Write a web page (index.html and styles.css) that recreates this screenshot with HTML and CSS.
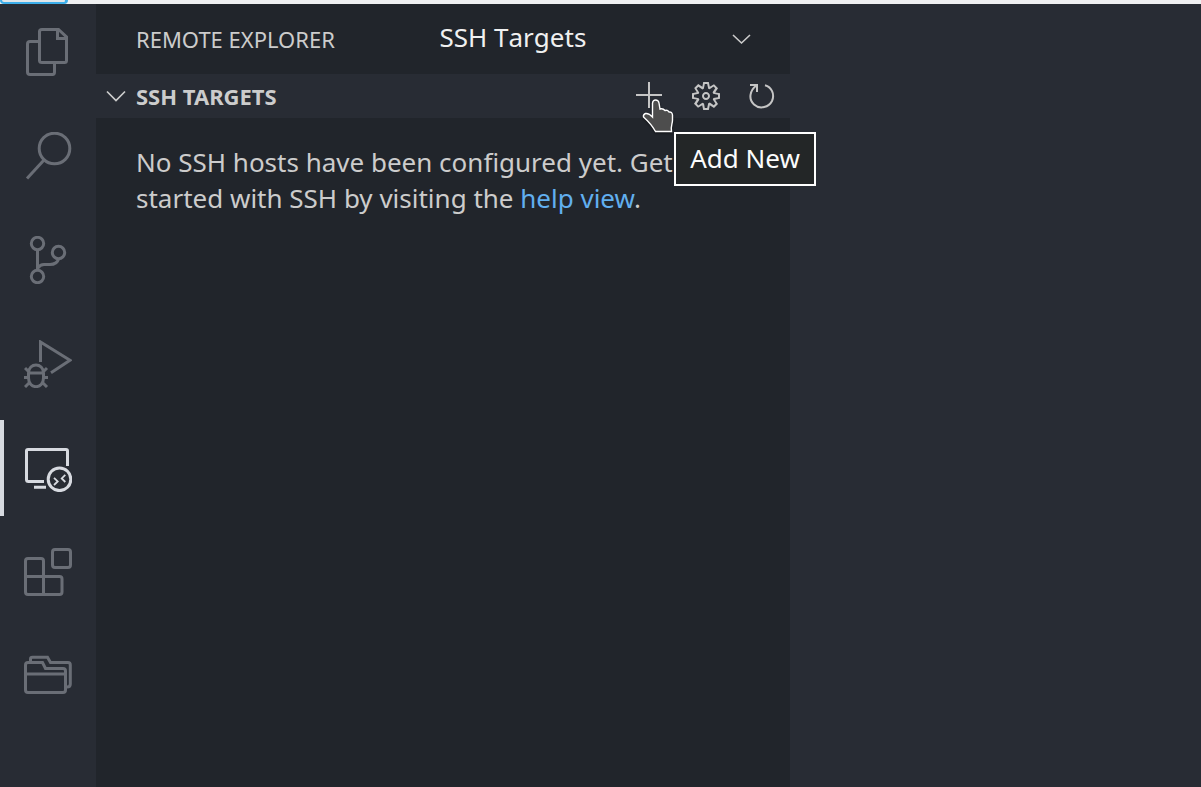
FILE: index.html
```
<!DOCTYPE html>
<html lang="en">
<head>
<meta charset="utf-8">
<title>Remote Explorer</title>
<link rel="stylesheet" href="styles.css">
</head>
<body>
<div class="top-strip"><span class="top-tab"></span></div>
<div class="workbench">
  <nav class="activity-bar">
    <div class="activity"><svg viewBox="24 28 48 48"><path d="M42 29.5H58.5L66.5 37V60.5Q66.5 62.5 64.5 62.5H42Q39.5 62.5 39.5 60.5V31.5Q39.5 29.5 42 29.5ZM57.5 29.5V38.5H66.5M39.5 41.5H30Q27.500 41.500 27.500 44V72Q27.500 74.500 30 74.500H52.500Q54.500 74.500 54.500 72V63"/></svg></div>
    <div class="activity"><svg viewBox="24 132 48 48"><circle cx="54.500" cy="148.500" r="15.300"/><path d="M44 160L27 178.500"/></svg></div>
    <div class="activity"><svg viewBox="24 236 48 48"><circle cx="37.500" cy="243.500" r="6.200"/><circle cx="58.500" cy="252.500" r="6.200"/><circle cx="37.500" cy="276.500" r="6.200"/><path d="M37.500 250V270M38 268Q40 264.500 44 264.500H50Q57 264.500 58.500 259"/></svg></div>
    <div class="activity"><svg viewBox="24 340 48 48"><path d="M40.500 362V342L70 360.300L51 372.800M28 373H44M28.500 373C28.500 362.300 43.500 362.300 43.500 373V378C43.500 389.500 28.500 389.500 28.500 378ZM29 372L25 368M43 372L47 368M29 377.500H24M43 377.500H48M30 382L25 387M42 382L47 387"/></svg></div>
    <div class="activity active"><svg viewBox="24 444 48 48"><path d="M67.500 466V451Q67.500 449.500 66 449.500H28Q26.500 449.500 26.500 451V479.500Q26.500 481.500 28.500 481.500H44M34 487.300H46"/><circle cx="59.500" cy="479.300" r="11.300"/><path class="thin" d="M54 477.800L57.700 481.400L54 485M65.300 474.800L61.700 478.400L65.300 482"/></svg></div>
    <div class="activity"><svg viewBox="24 548 48 48"><rect x="52.500" y="549.500" width="18" height="18" rx="2.500"/><path d="M28 558.500H41Q43.500 558.500 43.500 561V576.500H59.500Q62 576.500 62 579V592Q62 594.500 59.500 594.500H28Q25.500 594.500 25.500 592V561Q25.500 558.500 28 558.500ZM25.500 576.500H43.500V594.500"/></svg></div>
    <div class="activity"><svg viewBox="24 652 48 48"><path d="M28 662.500H42.500L45.500 668.500H63Q65.500 668.500 65.500 671V690Q65.500 692.500 63 692.500H28Q25.500 692.500 25.500 690V665Q25.500 662.500 28 662.500ZM26 674H65M30.500 662V659Q30.500 657.300 32.500 657.300H47.500L50.500 662.500H68Q70.300 662.500 70.300 665V684Q70.300 687 67 687"/></svg></div>
  </nav>
  <aside class="sidebar">
    <header class="title-bar">
      <h2 class="view-title">REMOTE EXPLORER</h2>
      <div class="target-select"><span>SSH Targets</span><svg class="chevron" viewBox="0 0 20 14"><path d="M2 3L10.500 11L19 3"/></svg></div>
    </header>
    <div class="section-bar">
      <svg class="section-chevron" viewBox="0 0 20 14"><path d="M1 2.500L10 11.500L19 2.500"/></svg>
      <h3 class="section-title">SSH TARGETS</h3>
      <div class="actions">
        <div class="action add">
          <svg viewBox="634 80 32 32"><path d="M649 82V108M636 95H662"/></svg>
          <svg class="pointer" viewBox="641 97 36 38"><path d="M652.500 103Q653 100 655.500 100Q658.500 100 659 103L660 109Q663 108 665 110.500Q667.500 109.500 669 112Q672 111.500 672.500 115V120C672.500 124 670.500 126 671.500 131.500H655.500C653 127 648 121 643.500 117Q643 114.500 645.500 113.500Q649 113 652.500 117Z"/></svg>
          <div class="tooltip">Add New</div>
        </div>
        <div class="action"><svg class="gear" viewBox="0 0 16 16"><path d="M9.100 4.400L8.600 2H7.400l-.5 2.400-.7.3-2-1.300-.9.8 1.300 2-.2.7-2.400.5v1.200l2.400.5.3.8-1.300 2 .8.8 2-1.300.8.3.4 2.300h1.200l.5-2.400.8-.3 2 1.300.8-.8-1.300-2 .3-.8 2.300-.4V7.400l-2.400-.5-.3-.8 1.300-2-.8-.8-2 1.300-.7-.2zM9.400 1l.5 2.400L12 2.100l2 2-1.400 2.100 2.400.4v2.800l-2.400.5L14 12l-2 2-2.100-1.400-.5 2.400H6.600l-.5-2.400L4 13.900l-2-2 1.400-2.100L1 9.400V6.600l2.400-.5L2.100 4l2-2 2.100 1.400.4-2.400h2.800zm.6 7c0 1.100-.9 2-2 2s-2-.9-2-2 .9-2 2-2 2 .9 2 2zM8 9c.6 0 1-.4 1-1s-.4-1-1-1-1 .4-1 1 .4 1 1 1z"/></svg></div>
        <div class="action"><svg viewBox="746 80 32 32"><path d="M750 85H757V92M756.500 85.500C750 90 748 99 754 104.500C760 110 769 107 772 101C775 94 771.500 87 765 85.300"/></svg></div>
      </div>
    </div>
    <p class="welcome">No SSH hosts have been configured yet. Get<br>started with SSH by visiting the <a class="link">help view</a>.</p>
  </aside>
  <main class="editor"></main>
</div>
</body>
</html>
```
FILE: styles.css
```
* { box-sizing: border-box; }
body {
  margin: 0;
  height: 787px;
  overflow: hidden;
  display: flex;
  flex-direction: column;
  background: #282c34;
  color: #cccccc;
  font-family: "Noto Sans", sans-serif;
}
svg { display: block; fill: none; }
.top-strip { height: 4px; flex: none; overflow: hidden; background: #eff0f1; }
.top-tab {
  display: block;
  width: 68px;
  height: 4px;
  border: solid #3daee9;
  border-width: 0 3px 2px 2px;
  border-radius: 0 0 5px 5px;
  background: #e1e6e9;
}
.workbench { flex: 1; display: flex; }
.activity-bar { width: 96px; display: flex; flex-direction: column; gap: 8px; }
.activity {
  height: 96px;
  display: flex;
  align-items: center;
  justify-content: center;
  border-left: 4px solid transparent;
  padding-right: 4px;
}
.activity svg { width: 48px; height: 48px; stroke: #6a6e76; stroke-width: 3; }
.active { border-left-color: #d7dae0; }
.active svg { stroke: #d7dae0; }
.activity .thin { stroke-width: 1.8; }
.sidebar { width: 694px; background: #21252b; }
.title-bar { height: 70px; display: flex; padding: 0 39px 0 40px; }
.view-title { margin: 0; width: 303.500px; font-size: 22px; font-weight: 400; line-height: 70px; }
.target-select {
  flex: 1;
  display: flex;
  justify-content: space-between;
  color: #f0f0f0;
  font-size: 26px;
  font-kerning: none;
  line-height: 66px;
}
.chevron { width: 20px; height: 14px; margin-top: 28px; stroke: #cccccc; stroke-width: 1.6; }
.section-bar {
  height: 44px;
  display: flex;
  align-items: center;
  padding: 0 12px 0 10px;
  background: #282c34;
}
.section-chevron { width: 20px; height: 14px; stroke: #cccccc; stroke-width: 1.7; }
.section-title { margin: 0 0 0 10px; font-size: 22px; font-weight: 700; line-height: 44px; }
.actions { margin-left: auto; display: flex; gap: 24px; }
.action { position: relative; width: 32px; height: 32px; }
.action svg { width: 32px; height: 32px; stroke: #c5c5c5; stroke-width: 2; }
.action .gear { fill: #c5c5c5; stroke: none; }
.action .pointer {
  position: absolute;
  left: 7px;
  top: 17px;
  width: 36px;
  height: 38px;
  fill: #4d4d4d;
  stroke: #ffffff;
  stroke-width: 1.4;
  filter: drop-shadow(0 1px 1px rgba(0, 0, 0, .5));
}
.tooltip {
  position: absolute;
  left: 40px;
  top: 52px;
  width: 142px;
  height: 54px;
  border: 2px solid #ffffff;
  background: #232627;
  color: #fcfcfc;
  font-size: 26px;
  line-height: 48px;
  text-align: center;
  white-space: nowrap;
}
.welcome { margin: 0; padding: 26px 0 0 40px; font-size: 26px; line-height: 36px; white-space: nowrap; }
.link { color: #61afef; }
.editor { flex: 1; }
```
